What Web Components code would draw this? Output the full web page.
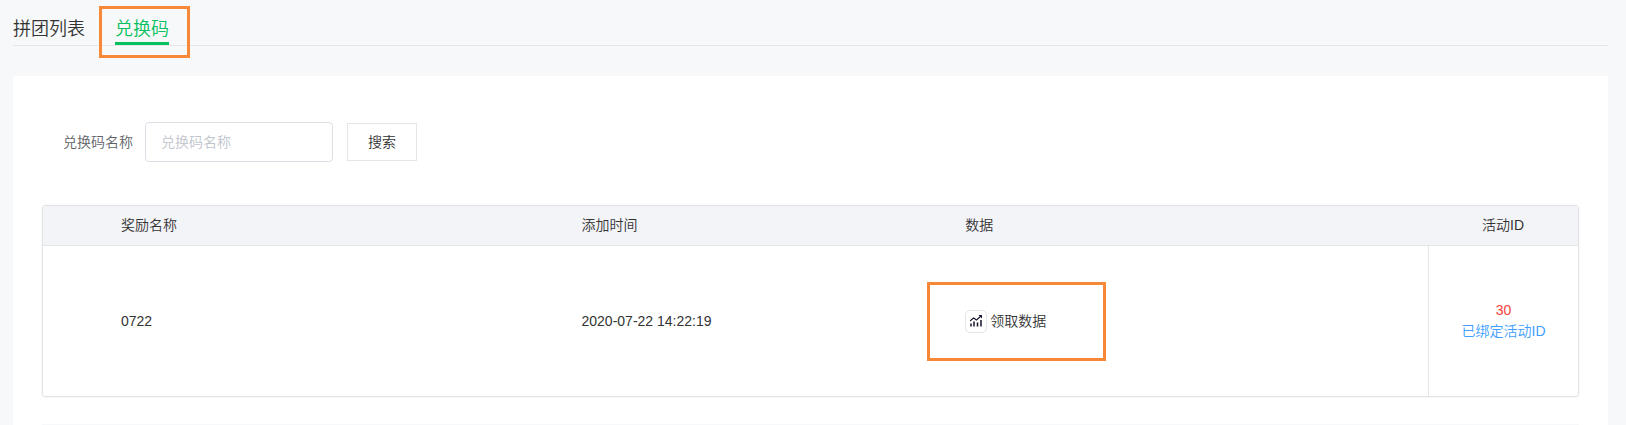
<!DOCTYPE html>
<html lang="zh-CN">

<head>
    <meta charset="UTF-8">
    <meta name="viewport" content="width=device-width, initial-scale=1.0">
    <title>兑换码</title>
    <style>
        body {
            margin: 0;
            padding: 0 18px 0 13px;
            background: #f7f8fa;
            color: #333;
            font-family: "Liberation Sans", "Noto Sans CJK SC", sans-serif;
            font-size: 14px;
            font-weight: 350;
            line-height: 21px;
        }
    </style>
</head>

<body>
    <page-tabs>
        <page-tab href="#groups">拼团列表</page-tab>
        <mark-box style="--top: -10px; --right: -21px; --bottom: -13px; --left: -16px">
            <page-tab href="#codes" active>兑换码</page-tab>
        </mark-box>
    </page-tabs>
    <page-panel>
        <search-form slot="search" label="兑换码名称" button="搜索"></search-form>
        <code-table>
            <span slot="name">0722</span>
            <span slot="time">2020-07-22 14:22:19</span>
            <mark-box slot="data" style="--top: -28px; --right: -60px; --bottom: -28px; --left: -38px">
                <data-button>领取数据</data-button>
            </mark-box>
            <span slot="id">30</span>
        </code-table>
    </page-panel>

    <script>
        class PageTabs extends HTMLElement {
            constructor() {
                super();
                this.attachShadow({ mode: 'open' });
                this.shadowRoot.innerHTML = `
                <style>
                    :host { display: block; }
                    nav {
                        display: flex;
                        gap: 30px;
                        padding-top: 16px;
                        border-bottom: 1px solid #e5e6e8;
                    }
                </style>
                <nav><slot></slot></nav>
            `;
            }
        }

        class PageTab extends HTMLElement {
            constructor() {
                super();
                this.attachShadow({ mode: 'open' });
                this.shadowRoot.innerHTML = `
                <style>
                    :host { display: block; }
                    a {
                        display: block;
                        box-sizing: border-box;
                        height: 29px;
                        border-bottom: 3px solid transparent;
                        color: #333;
                        font-size: 18px;
                        line-height: 27px;
                        text-decoration: none;
                    }
                    :host([active]) a {
                        border-color: #07c160;
                        color: #07c160;
                    }
                </style>
                <a href="${this.getAttribute('href')}"><slot></slot></a>
            `;
            }
        }

        // Orange frame drawn around the slotted content without taking up space
        class MarkBox extends HTMLElement {
            constructor() {
                super();
                this.attachShadow({ mode: 'open' });
                this.shadowRoot.innerHTML = `
                <style>
                    :host {
                        display: inline-block;
                        position: relative;
                        vertical-align: middle;
                    }
                    :host::after {
                        content: '';
                        position: absolute;
                        top: var(--top);
                        right: var(--right);
                        bottom: var(--bottom);
                        left: var(--left);
                        border: 3px solid #f78838;
                        pointer-events: none;
                    }
                </style>
                <slot></slot>
            `;
            }
        }

        class PagePanel extends HTMLElement {
            constructor() {
                super();
                this.attachShadow({ mode: 'open' });
                this.shadowRoot.innerHTML = `
                <style>
                    :host {
                        display: block;
                        margin-top: 30px;
                        padding: 46px 29px 0;
                        background: #fff;
                    }
                    .footer {
                        margin-top: 27px;
                        border-top: 1px solid #f7f8fa;
                    }
                </style>
                <slot name="search"></slot>
                <slot></slot>
                <div class="footer"></div>
            `;
            }
        }

        class SearchForm extends HTMLElement {
            constructor() {
                super();
                this.attachShadow({ mode: 'open' });
                const label = this.getAttribute('label');
                this.shadowRoot.innerHTML = `
                <style>
                    :host { display: block; }
                    form {
                        display: flex;
                        align-items: center;
                        margin: 0 0 43px;
                        padding-left: 21px;
                    }
                    label {
                        margin-right: 12px;
                        color: #606266;
                    }
                    input, button {
                        box-sizing: border-box;
                        background: #fff;
                        font: inherit;
                    }
                    input {
                        width: 188px;
                        height: 40px;
                        margin-right: 14px;
                        padding: 0 15px;
                        border: 1px solid #dcdfe6;
                        border-radius: 4px;
                        color: #606266;
                    }
                    input::placeholder { color: #c0c4cc; }
                    button {
                        height: 38px;
                        padding: 0 20px;
                        border: 1px solid #e5e6e8;
                        color: #333;
                    }
                </style>
                <form>
                    <label for="keyword">${label}</label>
                    <input id="keyword" type="text" placeholder="${label}">
                    <button type="button">${this.getAttribute('button')}</button>
                </form>
            `;
            }
        }

        class DataButton extends HTMLElement {
            constructor() {
                super();
                this.attachShadow({ mode: 'open' });
                this.shadowRoot.innerHTML = `
                <style>
                    :host { display: block; }
                    button {
                        display: flex;
                        align-items: center;
                        gap: 3px;
                        padding: 0;
                        border: 0;
                        background: none;
                        color: inherit;
                        font: inherit;
                    }
                    svg {
                        box-sizing: border-box;
                        width: 22px;
                        height: 23px;
                        padding: 4px;
                        border: 1px solid #e5e6e8;
                        border-radius: 5px;
                    }
                </style>
                <button type="button">
                    <svg viewBox="0 0 12 13" fill="none" stroke="#15152b" aria-hidden="true">
                        <path d="M0 6L3.5 3L6.5 5L11 1" stroke-width="1.1" />
                        <path d="M8.5 0H12.5V4Z" fill="#15152b" stroke="none" />
                        <path d="M1 8.5V11.5M4 6.5V11.5M7.5 7.5V11.5M11 5V11.5" stroke-width="1.5" />
                    </svg>
                    <slot></slot>
                </button>
            `;
            }
        }

        class CodeTable extends HTMLElement {
            constructor() {
                super();
                this.attachShadow({ mode: 'open' });
                this.shadowRoot.innerHTML = `
                <style>
                    :host {
                        display: block;
                        border: 1px solid #e2e3e5;
                        border-radius: 3px;
                        box-shadow: 0 0 2px rgba(0, 0, 0, 0.08);
                    }
                    table {
                        width: 100%;
                        border-spacing: 0;
                        table-layout: fixed;
                    }
                    th, td {
                        box-sizing: border-box;
                        padding: 0 0 0 78px;
                        text-align: left;
                        font-weight: inherit;
                    }
                    th {
                        height: 40px;
                        background: #f3f4f8;
                        border-bottom: 1px solid #e5e6e8;
                    }
                    td { height: 150px; }
                    .name { width: 30%; }
                    .time { width: 25%; }
                    th.id, td.id {
                        width: 150px;
                        padding: 0;
                        text-align: center;
                    }
                    td.id {
                        border-left: 1px solid #e5e6e8;
                        color: #f8413c;
                    }
                    a {
                        display: block;
                        color: #409eff;
                        text-decoration: none;
                    }
                </style>
                <table>
                    <thead>
                        <tr>
                            <th class="name">奖励名称</th>
                            <th class="time">添加时间</th>
                            <th>数据</th>
                            <th class="id">活动ID</th>
                        </tr>
                    </thead>
                    <tbody>
                        <tr>
                            <td><slot name="name"></slot></td>
                            <td><slot name="time"></slot></td>
                            <td><slot name="data"></slot></td>
                            <td class="id"><slot name="id"></slot><a href="#activity">已绑定活动ID</a></td>
                        </tr>
                    </tbody>
                </table>
            `;
            }
        }

        customElements.define('page-tabs', PageTabs);
        customElements.define('page-tab', PageTab);
        customElements.define('mark-box', MarkBox);
        customElements.define('page-panel', PagePanel);
        customElements.define('search-form', SearchForm);
        customElements.define('data-button', DataButton);
        customElements.define('code-table', CodeTable);
    </script>
</body>

</html>
